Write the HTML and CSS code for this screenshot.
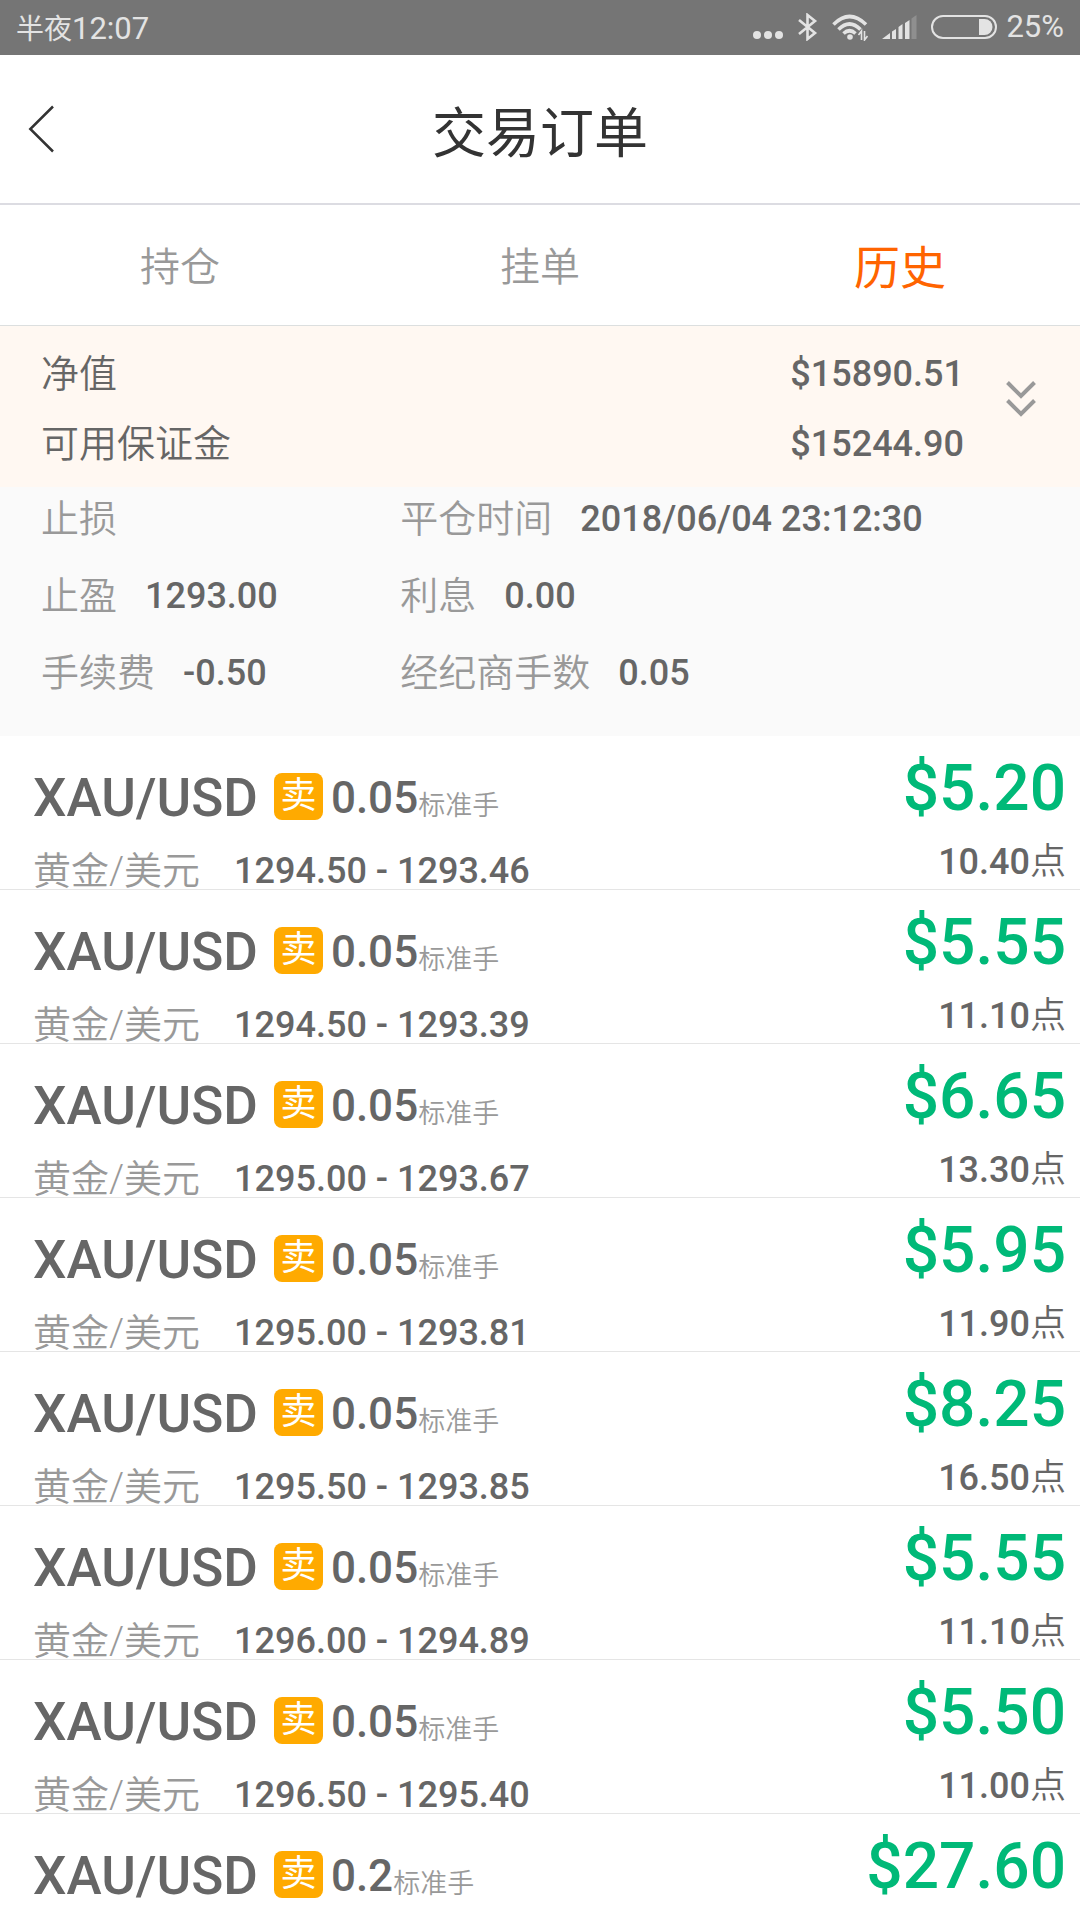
FILE: index.html
```html
<!DOCTYPE html>
<html lang="zh-CN">

<head>
  <meta charset="UTF-8" />
  <meta name="viewport" content="width=device-width, initial-scale=1.0" />
  <title>交易订单</title>
  <link rel="stylesheet" href="styles.css">
</head>

<body>
  <!-- 状态栏 -->
  <div class="status">
    <span class="clock">半夜<span class="num">12:07</span></span>
    <div class="status-icons">
      <svg width="32" height="28" viewBox="0 0 32 28" fill="#e3e3e3">
        <circle cx="5" cy="22" r="4" />
        <circle cx="16" cy="22" r="4" />
        <circle cx="27" cy="22" r="4" />
      </svg>
      <svg width="20" height="28" viewBox="0 0 20 28" fill="none" stroke="#e3e3e3" stroke-width="2.6">
        <path d="M1 7l16 13-7.500 6V2l7.500 6L1 21" />
      </svg>
      <svg width="36" height="28" viewBox="0 0 36 28" fill="none" stroke="#e3e3e3" stroke-width="3.600">
        <path d="M1.500 11.500Q17.500-4.500 34 11.500M6.500 16.500Q17.500 5.500 28.500 16.500M11.500 20.500Q17.500 15 23.500 20.500" />
        <circle cx="18" cy="24" r="2.800" fill="#e3e3e3" stroke="none" />
        <path d="M29.500 27V18l-3 4M32.500 18v9l3-4" stroke-width="1.600" />
      </svg>
      <svg width="35" height="28" viewBox="0 0 35 28" fill="#e3e3e3">
        <path d="M0 26l8-6v6zM10 18.500l4-2.500v10h-4zM16.500 14l4-3v15h-4zM23 10l4.500-3v19H23z" />
        <path d="M29.500 5.500l5-3.500v24h-5z" fill="#8f8f8f" />
      </svg>
      <div class="battery">
        <svg width="67" height="28" viewBox="0 0 67 28">
          <rect x="1" y="3" width="64" height="22" rx="11" fill="none" stroke="#e3e3e3" stroke-width="2" />
          <path d="M48 6h5.500a8 8 0 0 1 0 16H48z" fill="#e3e3e3" />
        </svg>
        <span class="num">25%</span>
      </div>
    </div>
  </div>

  <!-- 标题 -->
  <header class="header">
    <button class="back" type="button" aria-label="返回">
      <svg width="26" height="48" viewBox="0 0 26 48" fill="none" stroke="#333" stroke-width="2.500">
        <path d="M25 1.500L2.300 24 25 46.500" />
      </svg>
    </button>
    <h1>交易订单</h1>
  </header>

  <nav class="tabs">
    <a href="#">持仓</a>
    <a href="#">挂单</a>
    <a href="#" class="active">历史</a>
  </nav>

  <!-- 账户概览 -->
  <section class="summary">
    <dl>
      <div>
        <dt>净值</dt>
        <dd>$15890.51</dd>
      </div>
      <div>
        <dt>可用保证金</dt>
        <dd>$15244.90</dd>
      </div>
    </dl>
    <button class="expand" type="button" aria-label="展开">
      <svg width="30" height="36" viewBox="0 0 30 36" fill="none" stroke="#999" stroke-width="4">
        <path d="M1.500 1.500L15 15 28.500 1.500M1.500 19.500L15 33 28.500 19.500" />
      </svg>
    </button>
  </section>

  <!-- 展开的订单明细 -->
  <dl class="detail">
    <div>
      <dt>止损</dt>
      <dd></dd>
    </div>
    <div>
      <dt>平仓时间</dt>
      <dd>2018/06/04 23:12:30</dd>
    </div>
    <div>
      <dt>止盈</dt>
      <dd>1293.00</dd>
    </div>
    <div>
      <dt>利息</dt>
      <dd>0.00</dd>
    </div>
    <div>
      <dt>手续费</dt>
      <dd>-0.50</dd>
    </div>
    <div>
      <dt>经纪商手数</dt>
      <dd>0.05</dd>
    </div>
  </dl>

  <!-- 历史订单 -->
  <ul class="orders">
    <li>
      <div class="info">
        <div class="pair"><b>XAU/USD</b><span class="badge">卖</span><span class="lots">0.05</span><small>标准手</small></div>
        <div class="price"><span class="name">黄金/美元</span><span>1294.50 - 1293.46</span></div>
      </div>
      <div class="profit">
        <div class="amount">$5.20</div>
        <div class="points">10.40<span>点</span></div>
      </div>
    </li>
    <li>
      <div class="info">
        <div class="pair"><b>XAU/USD</b><span class="badge">卖</span><span class="lots">0.05</span><small>标准手</small></div>
        <div class="price"><span class="name">黄金/美元</span><span>1294.50 - 1293.39</span></div>
      </div>
      <div class="profit">
        <div class="amount">$5.55</div>
        <div class="points">11.10<span>点</span></div>
      </div>
    </li>
    <li>
      <div class="info">
        <div class="pair"><b>XAU/USD</b><span class="badge">卖</span><span class="lots">0.05</span><small>标准手</small></div>
        <div class="price"><span class="name">黄金/美元</span><span>1295.00 - 1293.67</span></div>
      </div>
      <div class="profit">
        <div class="amount">$6.65</div>
        <div class="points">13.30<span>点</span></div>
      </div>
    </li>
    <li>
      <div class="info">
        <div class="pair"><b>XAU/USD</b><span class="badge">卖</span><span class="lots">0.05</span><small>标准手</small></div>
        <div class="price"><span class="name">黄金/美元</span><span>1295.00 - 1293.81</span></div>
      </div>
      <div class="profit">
        <div class="amount">$5.95</div>
        <div class="points">11.90<span>点</span></div>
      </div>
    </li>
    <li>
      <div class="info">
        <div class="pair"><b>XAU/USD</b><span class="badge">卖</span><span class="lots">0.05</span><small>标准手</small></div>
        <div class="price"><span class="name">黄金/美元</span><span>1295.50 - 1293.85</span></div>
      </div>
      <div class="profit">
        <div class="amount">$8.25</div>
        <div class="points">16.50<span>点</span></div>
      </div>
    </li>
    <li>
      <div class="info">
        <div class="pair"><b>XAU/USD</b><span class="badge">卖</span><span class="lots">0.05</span><small>标准手</small></div>
        <div class="price"><span class="name">黄金/美元</span><span>1296.00 - 1294.89</span></div>
      </div>
      <div class="profit">
        <div class="amount">$5.55</div>
        <div class="points">11.10<span>点</span></div>
      </div>
    </li>
    <li>
      <div class="info">
        <div class="pair"><b>XAU/USD</b><span class="badge">卖</span><span class="lots">0.05</span><small>标准手</small></div>
        <div class="price"><span class="name">黄金/美元</span><span>1296.50 - 1295.40</span></div>
      </div>
      <div class="profit">
        <div class="amount">$5.50</div>
        <div class="points">11.00<span>点</span></div>
      </div>
    </li>
    <li>
      <div class="info">
        <div class="pair"><b>XAU/USD</b><span class="badge">卖</span><span class="lots">0.2</span><small>标准手</small></div>
      </div>
      <div class="profit">
        <div class="amount">$27.60</div>
      </div>
    </li>
  </ul>
</body>

</html>
```
FILE: styles.css
```css
* {
  box-sizing: border-box;
}

body {
  display: flex;
  flex-direction: column;
  height: 100vh;
  margin: 0;
  color: #666;
  background-color: #fff;
  font-family: Roboto, "Noto Sans CJK SC", sans-serif;
  font-weight: 350;
}

dl,
dd,
ul {
  margin: 0;
  padding: 0;
}

button {
  padding: 0;
  border: none;
  background: none;
}

svg {
  display: block;
}

/* 状态栏 */
.status {
  display: flex;
  justify-content: space-between;
  align-items: center;
  height: 55px;
  padding: 0 16px 2px;
  color: #e3e3e3;
  background-color: #757575;
  font-size: 28px;
  font-weight: 400;
}

.num {
  font-size: 31px;
}

.status-icons {
  display: flex;
  align-items: center;
  gap: 14px;
}

.battery {
  display: flex;
  align-items: center;
  gap: 8px;
}

/* 标题 */
.header {
  display: grid;
  grid-template-columns: 1fr auto 1fr;
  align-items: center;
  height: 150px;
  padding: 0 28px;
  border-bottom: 2px solid #dcdce2;
}

.back {
  justify-self: start;
}

h1 {
  margin: 0;
  color: #333;
  font-size: 54px;
  font-weight: 400;
}

/* 标签 */
.tabs {
  display: flex;
  height: 121px;
  border-bottom: 1px solid #dcdfdf;
}

.tabs a {
  flex: 1;
  color: #999;
  font-size: 40px;
  line-height: 126px;
  text-align: center;
  text-decoration: none;
}

.tabs .active {
  color: #ff6400;
  font-size: 46px;
  font-weight: 400;
}

/* 账户概览 */
.summary {
  display: flex;
  align-items: flex-start;
  padding: 23px 44px 18px 41px;
  background-color: #fff8f2;
}

.summary dl {
  display: flex;
  flex: 1;
  flex-direction: column;
  gap: 20px;
}

.summary dl div {
  display: flex;
  justify-content: space-between;
}

.expand {
  margin: 32px 0 0 42px;
}

dt {
  font-size: 38px;
  line-height: 50px;
}

dd {
  font-size: 36px;
  font-weight: 500;
  line-height: 50px;
}

/* 明细 */
.detail {
  display: grid;
  grid-template-columns: 9fr 16fr;
  row-gap: 27px;
  padding: 7px 41px 38px;
  background-color: #fafafa;
}

.detail div {
  display: flex;
  gap: 28px;
}

.detail dt {
  color: #999;
}

.status,
.header,
.tabs,
.summary,
.detail {
  flex-shrink: 0;
}

/* 订单列表 */
.orders {
  flex: 1;
  min-height: 0;
  overflow-y: auto;
  scrollbar-width: none;
  list-style-type: none;
}

.orders li {
  display: flex;
  justify-content: space-between;
  min-height: 154px;
  padding: 21px 14px 0 33px;
  border-bottom: 1px solid #e5e5e5;
}

.info {
  padding-top: 11px;
}

.pair {
  display: flex;
  align-items: center;
  height: 60px;
  font-weight: 500;
}

.pair b {
  font-size: 53px;
  font-weight: 500;
}

.badge {
  width: 49px;
  height: 47px;
  margin: 0 8px 4px 16px;
  border-radius: 8px;
  color: #fff;
  background-color: #ffaa00;
  font-size: 36px;
  font-weight: 400;
  line-height: 47px;
  text-align: center;
}

.lots {
  font-size: 44px;
}

.pair small {
  padding-top: 10px;
  color: #999;
  font-size: 27px;
  font-weight: 350;
}

.price {
  display: flex;
  gap: 34px;
  margin-top: 25px;
  font-size: 36px;
  font-weight: 500;
  line-height: 36px;
}

.price .name {
  color: #999;
  font-size: 38px;
  font-weight: 350;
}

.profit {
  text-align: right;
}

.amount {
  color: #00b978;
  font-size: 64px;
  font-weight: 500;
  line-height: 64px;
}

.points {
  margin-top: 23px;
  font-size: 36px;
  font-weight: 500;
  line-height: 36px;
}

.points span {
  font-weight: 350;
}
```
